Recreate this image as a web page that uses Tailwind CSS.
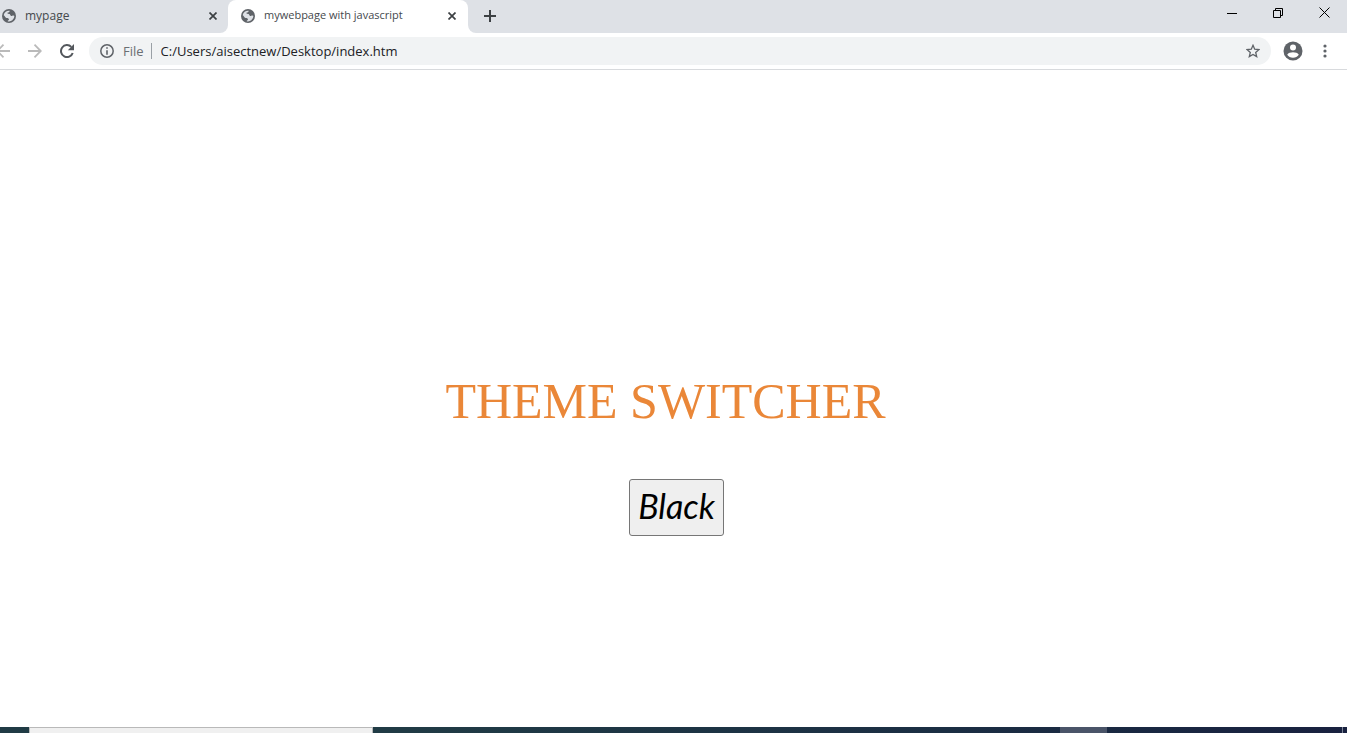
<!DOCTYPE html>
<html lang="en">
<head>
<meta charset="utf-8">
<meta name="viewport" content="width=device-width, initial-scale=1">
<title>mywebpage with javascript</title>
<script src="https://cdn.jsdelivr.net/npm/@tailwindcss/browser@4"></script>
</head>
<body class="flex h-screen flex-col overflow-hidden bg-white font-['Open_Sans','Noto_Sans',sans-serif]">
<svg class="hidden" aria-hidden="true">
  <symbol id="globe" viewBox="0 0 14 14">
    <circle cx="7" cy="7" r="7" fill="#5f6368"/>
    <path d="M7.700 1.700c-.3.7-.1 1.200-.8 1.500-.8.3-1.500.2-1.500 1 0 .7 1.500.4 2.200.9.8.6.5 1.700 1.600 1.900.9.2 1.300-.7 2.300-.5.5.1.7.3.9.6A5.400 5.400 0 0 1 5.700 12.300c-.1-.8.8-.9 1.200-1.500.3-.5-.2-1.300-.9-1.600-.8-.3-1.200.2-2-.4C3.200 8.200 2.700 6.700 1.700 6.300A5.400 5.400 0 0 1 7.700 1.700Z" fill="#dee1e6"/>
  </symbol>
  <symbol id="cross" viewBox="0 0 8 8"><path d="M.5.5l7 7M7.500.5l-7 7" stroke="#3c4043" stroke-width="1.700"/></symbol>
</svg>
<header class="shrink-0">
  <div class="flex h-[33px] text-[#45494d]">
    <div class="flex w-[228px] items-center rounded-br-lg bg-[#dee1e6] pr-[11px] pb-[2px] pl-[2px]">
      <svg class="size-[14px]"><use href="#globe"/></svg>
      <span class="ml-[9px] flex-1 text-[12px]">mypage</span>
      <button aria-label="Close mypage"><svg class="size-2"><use href="#cross"/></svg></button>
    </div>
    <div class="w-[240px] bg-linear-to-b from-[#dee1e6] from-50% to-white to-50%">
      <div class="flex h-full items-center rounded-t-lg bg-white pr-3 pb-[2px] pl-[13px]">
        <svg class="size-[14px]"><use href="#globe"/></svg>
        <span class="ml-[9px] flex-1 whitespace-nowrap text-[11px]">mywebpage with javascript</span>
        <button aria-label="Close mywebpage with javascript"><svg class="size-2"><use href="#cross"/></svg></button>
      </div>
    </div>
    <div class="flex flex-1 items-center justify-between rounded-bl-lg bg-[#dee1e6] pr-[17px] pb-[2px] pl-4">
      <button aria-label="New tab"><svg class="size-3" viewBox="0 0 12 12"><path d="M6 0v12M0 6h12" stroke="#3c4043" stroke-width="2"/></svg></button>
      <div class="flex items-center gap-9 pb-[6px]">
        <button aria-label="Minimize"><svg class="size-[10px]" viewBox="0 0 10 10"><path d="M0 5.500h10" stroke="#000"/></svg></button>
        <button aria-label="Restore"><svg class="size-[10px]" viewBox="0 0 10 10" fill="none" stroke="#000"><path d="M.5 2.500h7v7h-7zM2.500 2.500v-2h7v7h-2"/></svg></button>
        <button aria-label="Close window"><svg class="size-[11px]" viewBox="0 0 11 11"><path d="M.5.5l10 10M10.500.5l-10 10" stroke="#000"/></svg></button>
      </div>
    </div>
  </div>
  <div class="flex h-[37px] items-center border-b border-[#d8dadd] pr-5 text-[13px]">
    <button aria-label="Back" class="w-[10px] overflow-hidden"><svg class="-ml-1 h-[14px] w-[14px]" viewBox="0 0 14 14" fill="none" stroke="#bababa" stroke-width="1.800"><path d="M14 7H1M7.500.7L1.200 7l6.300 6.300"/></svg></button>
    <button aria-label="Forward" class="ml-[18px]"><svg class="size-[14px]" viewBox="0 0 14 14" fill="none" stroke="#bababa" stroke-width="1.800"><path d="M0 7h13M6.500.7L12.800 7l-6.300 6.300"/></svg></button>
    <button aria-label="Reload" class="ml-[18px]"><svg class="size-[14px]" viewBox="0 0 14 14"><path d="M12.700 9A6 6 0 1 1 11.300 2.900" fill="none" stroke="#54585d" stroke-width="2"/><path d="M14 0v6.200H7.800z" fill="#54585d"/></svg></button>
    <div class="ml-[15px] flex h-7 flex-1 items-center rounded-full bg-[#f1f3f4] px-[11px]">
      <svg class="size-[14px]" viewBox="0 0 14 14"><circle cx="7" cy="7" r="6.200" fill="none" stroke="#5f6368" stroke-width="1.500"/><path d="M7 3.200v1.600M7 6.200v4.600" stroke="#5f6368" stroke-width="1.600"/></svg>
      <span class="ml-[9px] pt-px text-[#6b6f73]">File</span>
      <span class="ml-[7px] h-4 w-px bg-[#9aa0a6]"></span>
      <input aria-label="Address" value="C:/Users/aisectnew/Desktop/index.htm" class="ml-[9px] min-w-0 flex-1 bg-transparent pt-px text-[#202124] outline-none">
      <button aria-label="Bookmark this page"><svg class="size-[14px]" viewBox="0 0 14 14"><path d="M7 1.300l1.700 3.900 4.200.4-3.200 2.800 1 4.200L7 10.400l-3.700 2.200 1-4.200L1.100 5.600l4.200-.4z" fill="none" stroke="#5f6368" stroke-width="1.300"/></svg></button>
    </div>
    <button aria-label="Profile" class="ml-3"><svg class="size-5" viewBox="0 0 20 20"><circle cx="10" cy="10" r="9.500" fill="#5f6368"/><circle cx="10" cy="6.500" r="3" fill="#fff"/><path d="M4.200 13.700c1-1.700 3.400-2.400 5.800-2.400s4.800.7 5.800 2.400A7 7 0 0 1 10 16.700a7 7 0 0 1-5.800-3z" fill="#fff"/></svg></button>
    <button aria-label="Menu" class="ml-5"><svg class="h-[14px] w-1" viewBox="0 0 4 14" fill="#5f6368"><circle cx="2" cy="2" r="1.600"/><circle cx="2" cy="7" r="1.600"/><circle cx="2" cy="12" r="1.600"/></svg></button>
  </div>
</header>
<main class="flex min-h-0 flex-1 flex-col items-center justify-center pt-[110px]">
  <h1 class="pr-4 font-['Liberation_Serif',serif] text-[50px] leading-[60px] text-[#ea8738]">THEME SWITCHER</h1>
  <button class="mt-12 ml-[6px] h-[57px] w-[95px] rounded-[3px] border border-[#767676] bg-[#efefef] pb-1 font-['Lato',sans-serif] text-[34px] leading-10 text-black italic">Black</button>
</main>
<footer class="flex h-[6px] shrink-0 bg-linear-to-r from-[#203b45] from-30% via-[#1b2e43] via-70% to-[#18213f]">
  <div class="ml-[29px] w-[344px] border-x border-t border-[#b9b9b9] bg-[#f0f0f0]"></div>
  <div class="mr-[235px] ml-auto w-[47px] bg-[#4a5468]"></div>
  <div class="mr-1 w-px bg-[#7d8597]"></div>
</footer>
</body>
</html>
